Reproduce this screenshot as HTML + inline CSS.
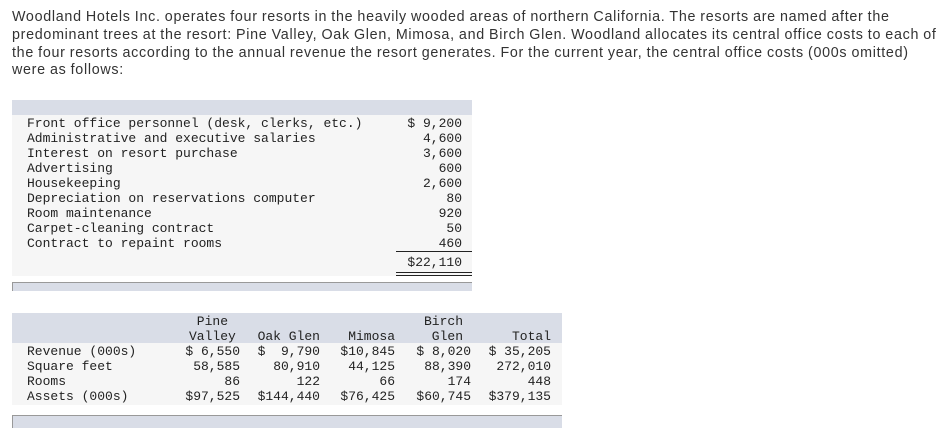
<!DOCTYPE html>
<html><head><meta charset="utf-8"><style>
body{margin:0;width:950px;height:428px;background:#fff;position:relative;overflow:hidden}
.p{position:absolute;left:12px;top:9px;font-family:"Liberation Sans",sans-serif;font-size:14.3px;letter-spacing:0.7px;word-spacing:-0.5px;line-height:17.8px;color:#333;white-space:nowrap}
.m{font-family:"Liberation Mono",monospace;font-size:13px;color:#222;position:absolute;white-space:pre;line-height:15px}
.bar{position:absolute;background:#d9dde7}
.r{text-align:right}
</style></head><body>
<div class="p">Woodland Hotels Inc. operates four resorts in the heavily wooded areas of northern California. The resorts are named after the<br>predominant trees at the resort: Pine Valley, Oak Glen, Mimosa, and Birch Glen. Woodland allocates its central office costs to each of<br>the four resorts according to the annual revenue the resort generates. For the current year, the central office costs (000s omitted)<br>were as follows:</div>

<div class="bar" style="left:12px;top:100px;width:460px;height:15px"></div>
<div style="position:absolute;left:12px;top:115px;width:460px;height:161px;background:#f6f6f6"></div>
<div class="m" style="left:27px;top:116px">Front office personnel (desk, clerks, etc.)
Administrative and executive salaries
Interest on resort purchase
Advertising
Housekeeping
Depreciation on reservations computer
Room maintenance
Carpet-cleaning contract
Contract to repaint rooms</div>
<div class="m r" style="left:380px;width:82px;top:116px">$ 9,200
4,600
3,600
600
2,600
80
920
50
460</div>
<div style="position:absolute;left:396px;top:251px;width:76px;height:1px;background:#222"></div>
<div class="m r" style="left:380px;width:82px;top:255px">$22,110</div>
<div style="position:absolute;left:396px;top:272px;width:76px;height:1px;background:#222"></div>
<div style="position:absolute;left:396px;top:275px;width:76px;height:1px;background:#222"></div>
<div class="bar" style="left:12px;top:282px;width:460px;height:9px;border-top:1px solid #999;border-left:1px solid #999;box-sizing:border-box"></div>

<div class="bar" style="left:12px;top:313px;width:550px;height:30px"></div>
<div style="position:absolute;left:12px;top:343px;width:550px;height:62px;background:#f6f6f6"></div>
<div class="m" style="left:27px;top:344px">Revenue (000s)
Square feet
Rooms
Assets (000s)</div>
<div class="m" style="left:189px;top:314px"> Pine
Valley</div>
<div class="m r" style="left:160px;width:80px;top:344px">$ 6,550
58,585
86
$97,525</div>
<div class="m r" style="left:240px;width:80px;top:329px">Oak Glen</div>
<div class="m r" style="left:240px;width:80px;top:344px">$  9,790
80,910
122
$144,440</div>
<div class="m r" style="left:315px;width:80px;top:329px">Mimosa</div>
<div class="m r" style="left:315px;width:80px;top:344px">$10,845
44,125
66
$76,425</div>
<div class="m" style="left:424px;top:314px">Birch
 Glen</div>
<div class="m r" style="left:391px;width:80px;top:344px">$ 8,020
88,390
174
$60,745</div>
<div class="m r" style="left:471px;width:80px;top:329px">Total</div>
<div class="m r" style="left:471px;width:80px;top:344px">$ 35,205
272,010
448
$379,135</div>
<div class="bar" style="left:12px;top:415px;width:550px;height:13px;border-top:1px solid #999;border-left:1px solid #999;box-sizing:border-box"></div>
</body></html>
